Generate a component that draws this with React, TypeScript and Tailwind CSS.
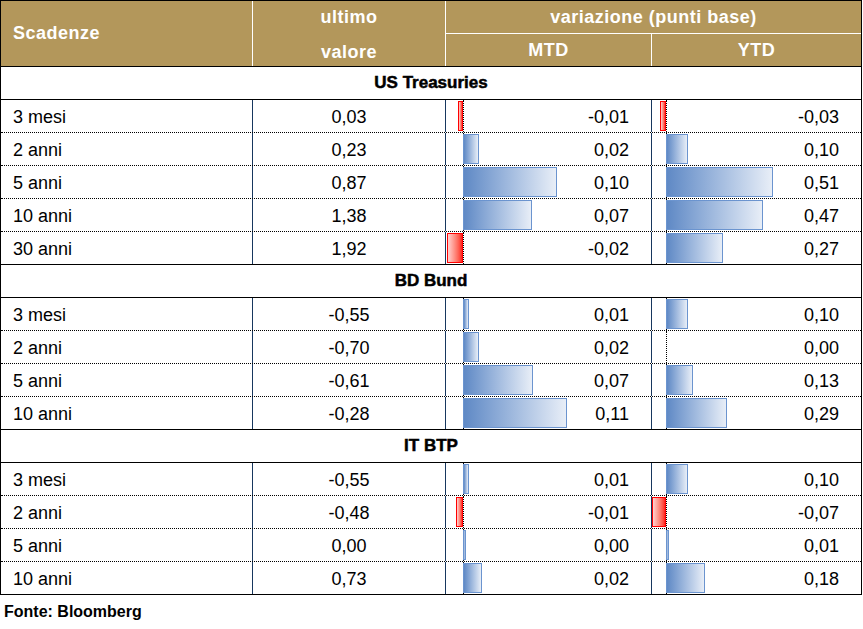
type Row = [string, string, number, string, number, string];

const sections: { title: string; rows: Row[] }[] = [
  {
    title: "US Treasuries",
    rows: [
      ["3 mesi", "0,03", -5, "-0,01", -6, "-0,03"],
      ["2 anni", "0,23", 16, "0,02", 22, "0,10"],
      ["5 anni", "0,87", 94, "0,10", 107, "0,51"],
      ["10 anni", "1,38", 69, "0,07", 97, "0,47"],
      ["30 anni", "1,92", -16, "-0,02", 57, "0,27"],
    ],
  },
  {
    title: "BD Bund",
    rows: [
      ["3 mesi", "-0,55", 6, "0,01", 22, "0,10"],
      ["2 anni", "-0,70", 16, "0,02", 0, "0,00"],
      ["5 anni", "-0,61", 70, "0,07", 27, "0,13"],
      ["10 anni", "-0,28", 104, "0,11", 61, "0,29"],
    ],
  },
  {
    title: "IT BTP",
    rows: [
      ["3 mesi", "-0,55", 6, "0,01", 22, "0,10"],
      ["2 anni", "-0,48", -7, "-0,01", -14, "-0,07"],
      ["5 anni", "0,00", 3, "0,00", 3, "0,01"],
      ["10 anni", "0,73", 19, "0,02", 39, "0,18"],
    ],
  },
];

const cols = "grid grid-cols-[252px_193px_206px_209px]";

function BarCell({ w, text, axis, last }: { w: number; text: string; axis: number; last?: boolean }) {
  // w in px, negative bars grow left from the axis
  const barStyle = w >= 0 ? { left: axis, width: w } : { left: axis + w, width: -w };
  return (
    <div className={`relative flex h-full items-center justify-end pr-[22px] ${last ? "" : "border-r border-[#17375e]"}`}>
      <div className="absolute top-0 bottom-0 border-l border-dotted border-black" style={{ left: axis }} />
      {w !== 0 && (
        <div
          className={
            w > 0
              ? "absolute top-[1px] bottom-[1px] border border-[#6b94cf] bg-gradient-to-r from-[#5f89c5] to-[#e8eef7]"
              : "absolute top-[1px] bottom-[1px] border border-[#ff0000] bg-gradient-to-l from-[#ff1a1a] to-[#ffd0d0]"
          }
          style={barStyle}
        />
      )}
      <span className="relative pt-[2px]">{text}</span>
    </div>
  );
}

export default function App() {
  return (
    <div className="h-[629px] w-[863px] bg-white font-['Liberation_Sans',Arial,sans-serif] text-black">
      <div className="w-[862px] border-x border-t border-black">
        {/* header */}
        <div className={`${cols} h-[66px] border-b border-black bg-[#b3975b] text-[18px] font-bold tracking-[0.5px] text-white`}>
          <div className="flex items-center border-r border-white pl-3">Scadenze</div>
          <div className="flex flex-col border-r border-white">
            <div className="flex h-[33px] items-center justify-center">ultimo</div>
            <div className="flex h-[32px] items-center justify-center pt-[4px]">valore</div>
          </div>
          <div className="col-span-2 flex flex-col">
            <div className="flex h-[33px] items-center justify-center border-b border-white">variazione (punti base)</div>
            <div className="grid h-[32px] grid-cols-[206px_209px]">
              <div className="flex items-center justify-center border-r border-white">MTD</div>
              <div className="flex items-center justify-center">YTD</div>
            </div>
          </div>
        </div>

        {sections.map((s) => (
          <div key={s.title}>
            <div className="flex h-[33px] items-center justify-center border-b border-black text-[17px] font-bold [-webkit-text-stroke:0.5px_black]">
              {s.title}
            </div>
            {s.rows.map((r, i) => (
              <div
                key={r[0]}
                className={`${cols} h-[33px] border-b text-[18px] ${
                  i === s.rows.length - 1 ? "border-solid border-black" : "border-dotted border-black"
                }`}
              >
                <div className="flex items-center border-r border-[#17375e] pl-3 pt-[2px]">{r[0]}</div>
                <div className="flex items-center justify-center border-r border-[#17375e] pt-[2px]">{r[1]}</div>
                <BarCell w={r[2]} text={r[3]} axis={17} />
                <BarCell w={r[4]} text={r[5]} axis={14} last />
              </div>
            ))}
          </div>
        ))}
      </div>
      <div className="pl-1 pt-[5px] text-[16px] font-bold">Fonte: Bloomberg</div>
    </div>
  );
}
